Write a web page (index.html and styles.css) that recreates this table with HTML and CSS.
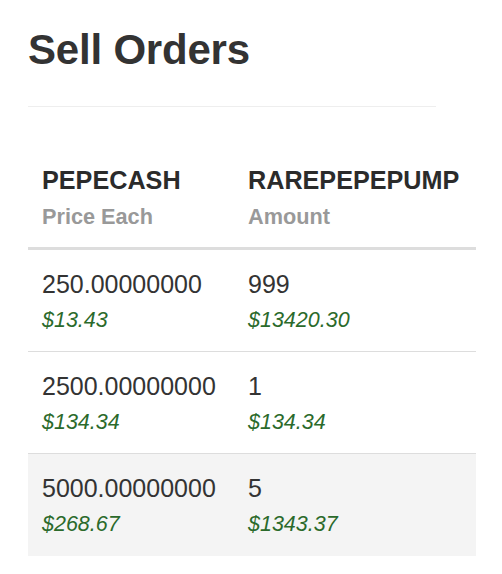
FILE: index.html
```html
<!DOCTYPE html>
<html>
<head>
<meta charset="utf-8">
<link rel="stylesheet" href="styles.css">
</head>
<body>
<div class="page">
  <h1 class="title">Sell Orders</h1>
  <hr class="rule">
  <table class="orders">
    <thead>
      <tr>
        <th class="col1"><div class="main">PEPECASH</div><div class="sub">Price Each</div></th>
        <th><div class="main">RAREPEPEPUMP</div><div class="sub">Amount</div></th>
      </tr>
    </thead>
    <tbody>
      <tr>
        <td class="col1"><div class="main">250.00000000</div><div class="usd">$13.43</div></td>
        <td><div class="main">999</div><div class="usd">$13420.30</div></td>
      </tr>
      <tr>
        <td class="col1"><div class="main">2500.00000000</div><div class="usd">$134.34</div></td>
        <td><div class="main">1</div><div class="usd">$134.34</div></td>
      </tr>
      <tr class="shade">
        <td class="col1"><div class="main">5000.00000000</div><div class="usd">$268.67</div></td>
        <td><div class="main">5</div><div class="usd">$1343.37</div></td>
      </tr>
    </tbody>
  </table>
</div>
</body>
</html>
```

FILE: styles.css
```css
html, body {
  margin: 0;
  padding: 0;
  background: #fff;
}

.page {
  padding: 27px 26px 0 28px;
  font-family: "Liberation Sans", Arial, sans-serif;
  color: #333;
}

.title {
  margin: 0;
  font-size: 42px;
  line-height: 46px;
  font-weight: bold;
  color: #333;
  letter-spacing: -0.2px;
}

.rule {
  width: 408px;
  margin: 33px 0 0 0;
  border: 0;
  border-top: 1px solid #eee;
  height: 0;
}

.orders {
  margin-top: 39px;
  width: 448px;
  border-collapse: collapse;
  border-spacing: 0;
}

.orders th,
.orders td {
  text-align: left;
  vertical-align: top;
  padding: 16px 14px 12px 14px;
}

.orders .col1 {
  width: 178px;
}

.orders thead th {
  border-bottom: 3px solid #ddd;
}

.orders tbody td {
  border-bottom: 1px solid #ddd;
}

.orders tbody tr:last-child td {
  border-bottom: 0;
  padding-bottom: 13px;
}

.main {
  font-size: 25px;
  line-height: 36px;
  white-space: nowrap;
}

th .main {
  font-weight: bold;
  font-size: 25.2px;
  color: #2b2b2b;
}

.sub {
  font-size: 21.7px;
  line-height: 37px;
  font-weight: bold;
  color: #999;
}

.usd {
  font-size: 21.5px;
  line-height: 37px;
  font-style: italic;
  color: #2b6a2b;
}

.shade td {
  background: #f4f4f4;
}
```
